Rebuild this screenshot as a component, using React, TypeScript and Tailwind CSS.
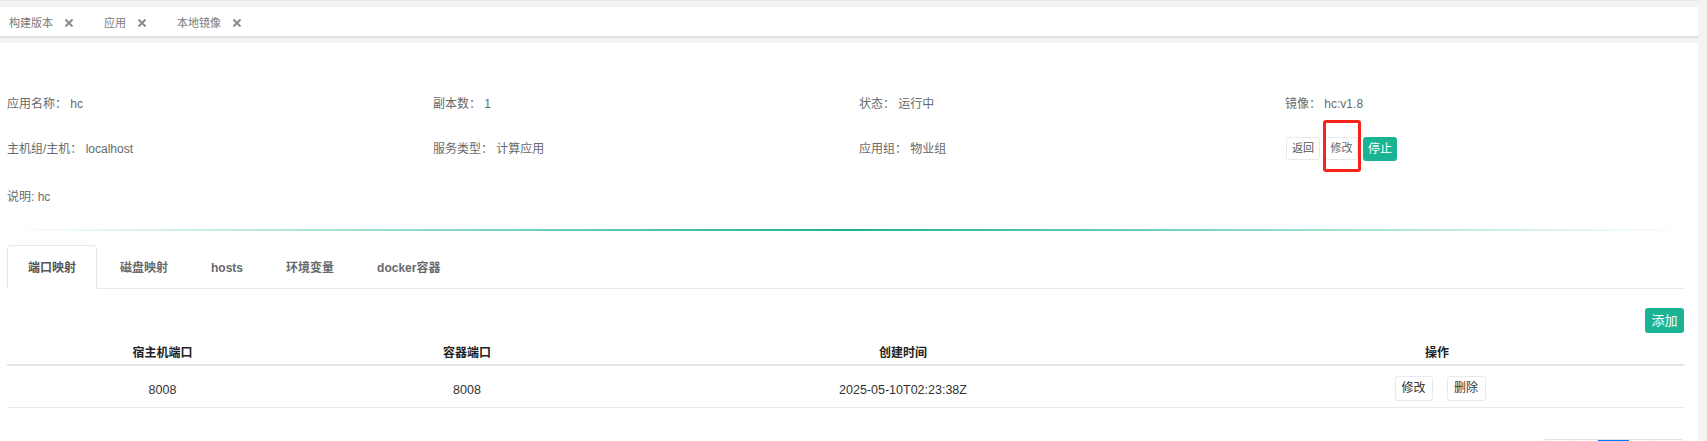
import React from "react";

const TOP_TABS = ["构建版本", "应用", "本地镜像"];
const SUB_TABS = ["端口映射", "磁盘映射", "hosts", "环境变量", "docker容器"];

function CloseIcon() {
  return (
    <svg width="8" height="8" viewBox="0 0 8 8" className="shrink-0">
      <path d="M1.2 1.2L6.8 6.8M6.8 1.2L1.2 6.8" stroke="#8c8c8c" strokeWidth="2" strokeLinecap="square" />
    </svg>
  );
}

function Info({ label, value }: { label: string; value: string }) {
  return (
    <div className="whitespace-nowrap">
      {label} {value}
    </div>
  );
}

export default function App() {
  return (
    <div className="flex h-[441px] items-start overflow-hidden bg-[#f3f3f4] font-['Liberation_Sans','Noto_Sans_CJK_SC',sans-serif] text-[12px] text-[#676a6c]">
      <div className="w-[1698px] shrink-0">
        {/* top tab strip */}
        <div className="h-[1px] bg-[#e8e8e9]" />
        <div className="mt-[6px] flex h-[31px] items-center gap-[31px] border-b-2 border-[#dde2e7] bg-white pl-[9px] pt-[3px] text-[11px] text-[#7a7a7a]">
          {TOP_TABS.map((t) => (
            <div key={t} className="flex items-center gap-[12px]">
              <span>{t}</span>
              <CloseIcon />
            </div>
          ))}
        </div>

        {/* page content */}
        <div className="mt-[5px] min-h-[420px] bg-white pl-[7px] pr-[14px]">
          <div className="grid auto-rows-[45px] grid-cols-[426px_426px_426px_1fr] items-center pt-[38px]">
            <Info label="应用名称：" value="hc" />
            <Info label="副本数：" value="1" />
            <Info label="状态：" value="运行中" />
            <Info label="镜像：" value="hc:v1.8" />

            <Info label="主机组/主机：" value="localhost" />
            <Info label="服务类型：" value="计算应用" />
            <Info label="应用组：" value="物业组" />
            <div className="flex items-center gap-[5px] pl-[1px]">
              <button className="h-[23px] w-[34px] rounded-[3px] border border-[#e7eaec] bg-white text-[11px] text-[#555]">返回</button>
              <div className="relative">
                <button className="h-[23px] w-[33px] rounded-[3px] border border-[#e7eaec] bg-white text-[11px] text-[#666]">修改</button>
                <div className="pointer-events-none absolute left-[-2px] top-[-17px] h-[52px] w-[38px] rounded-[3px] border-[3px] border-[#f5231b]" />
              </div>
              <button className="h-[24px] w-[34px] rounded-[3px] bg-[#1ab394] text-[12px] text-white">停止</button>
            </div>

            <div className="col-span-4 whitespace-nowrap pt-[6px]">说明: hc</div>
          </div>

          <div className="mt-[13px] h-[2px] bg-gradient-to-r from-transparent via-[#1ab394] to-transparent" />

          {/* sub tabs */}
          <div className="mt-[14px] flex border-b border-[#e7eaec] text-[12px] font-bold">
            {SUB_TABS.map((t, i) => (
              <div
                key={t}
                className={
                  i === 0
                    ? "-mb-px mr-[3px] flex h-[44px] items-center rounded-t-[4px] border border-[#e7eaec] border-b-white bg-white px-[20px] pt-[2px] text-[#555]"
                    : "mr-[3px] flex h-[43px] items-center px-[20px] pt-[2px] text-[#676a6c]"
                }
              >
                {t}
              </div>
            ))}
          </div>

          <div className="mt-[19px] flex justify-end">
            <button className="h-[25px] w-[39px] rounded-[3px] bg-[#1ab394] text-[13px] text-white">添加</button>
          </div>

          <table className="w-full table-fixed border-collapse text-center text-[12.5px] text-[#333]">
            <colgroup>
              <col className="w-[311px]" />
              <col className="w-[298px]" />
              <col className="w-[574px]" />
              <col />
            </colgroup>
            <thead>
              <tr className="h-[32px] border-b-2 border-[#e2e5e9] text-[12px]">
                <th className="pt-[8px] font-bold text-[#222]">宿主机端口</th>
                <th className="pt-[8px] font-bold text-[#222]">容器端口</th>
                <th className="pt-[8px] font-bold text-[#222]">创建时间</th>
                <th className="pt-[8px] font-bold text-[#222]">操作</th>
              </tr>
            </thead>
            <tbody>
              <tr className="h-[42px] border-b border-[#e7eaec]">
                <td className="pt-[8px]">8008</td>
                <td className="pt-[8px]">8008</td>
                <td className="pt-[8px]">2025-05-10T02:23:38Z</td>
                <td className="pt-[4px]">
                  <div className="flex justify-center gap-[14px] pl-[6px]">
                    <button className="h-[25px] w-[38px] rounded-[3px] border border-[#e7eaec] bg-white text-[12px] text-[#333]">修改</button>
                    <button className="h-[25px] w-[39px] rounded-[3px] border border-[#e7eaec] bg-white text-[12px] text-[#333]">删除</button>
                  </div>
                </td>
              </tr>
            </tbody>
          </table>

          <div className="mt-[31px] flex justify-end">
            <div className="flex h-[32px] overflow-hidden rounded-[3px] border border-[#dee2e6] text-[12px]">
              <span className="flex w-[28px] items-center justify-center border-r border-[#dee2e6]">«</span>
              <span className="flex w-[26px] items-center justify-center border-r border-[#dee2e6]">‹</span>
              <span className="flex w-[31px] items-center justify-center bg-[#007bff] text-white">1</span>
              <span className="flex w-[25px] items-center justify-center border-r border-[#dee2e6]">›</span>
              <span className="flex w-[29px] items-center justify-center">»</span>
            </div>
          </div>
        </div>
      </div>
    </div>
  );
}
